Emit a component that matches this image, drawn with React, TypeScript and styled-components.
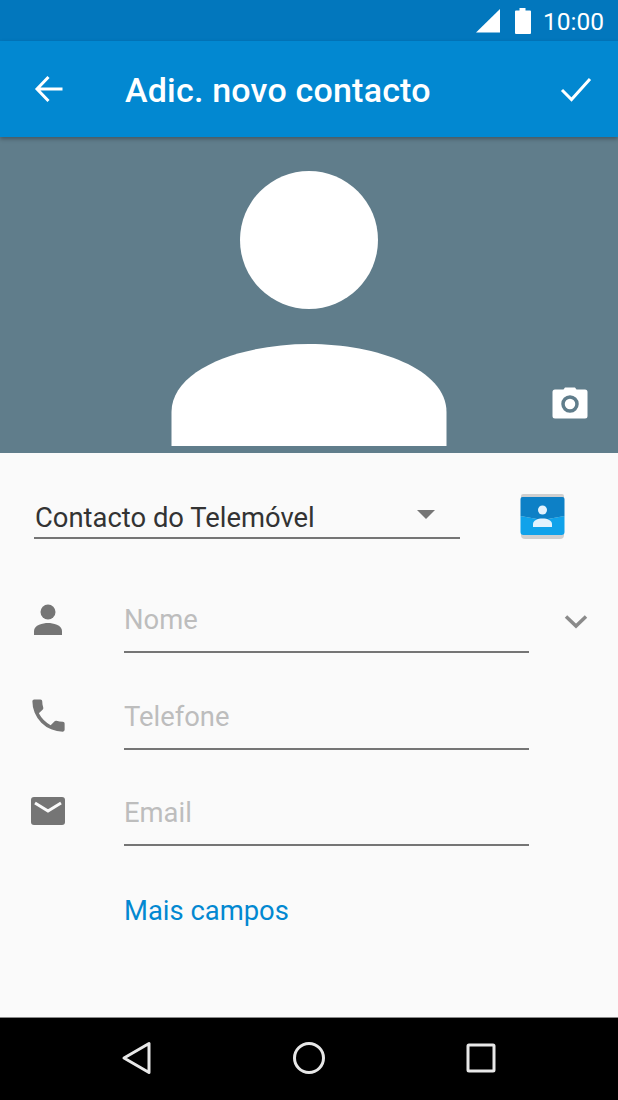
import { FC, ReactNode } from "react";
import styled, { createGlobalStyle } from "styled-components";

const GlobalStyle = createGlobalStyle`
    html, body {
        margin: 0;
        padding: 0;
        background: #000;
    }
    body {
        font-family: Roboto, "Noto Sans", sans-serif;
    }
`;

const Screen = styled.div`
    width: 618px;
    height: 1100px;
    display: flex;
    flex-direction: column;
    overflow: hidden;
    background: #fafafa;
`;

const StatusBar = styled.div`
    height: 41px;
    flex: none;
    background: #0277bd;
    color: #fff;
    display: flex;
    align-items: center;
    justify-content: flex-end;
    padding-right: 14px;
`;

const BatteryIcon = styled.svg`
    margin-left: 13px;
`;

const StatusTime = styled.span`
    font-size: 24.5px;
    margin-left: 11px;
    line-height: 41px;
    position: relative;
    top: 1px;
`;

const Header = styled.header`
    height: 96px;
    flex: none;
    background: #0288d1;
    display: flex;
    align-items: center;
    color: #fff;
    position: relative;
    z-index: 1;
    box-shadow: 0 2px 4px rgba(0, 0, 0, 0.3);
`;

const HeaderIcon = styled.svg`
    flex: none;
    margin-left: 28px;
`;

const Title = styled.h1`
    margin: 0 0 0 56px;
    flex: 1;
    font-size: 34px;
    font-weight: 500;
    letter-spacing: 0.2px;
    line-height: 96px;
    padding-top: 1px;
    box-sizing: border-box;
    height: 96px;
`;

const CheckIcon = styled.svg`
    flex: none;
    margin-right: 22px;
`;

const Photo = styled.div`
    height: 316px;
    flex: none;
    background: #607d8b;
    position: relative;
    display: flex;
    justify-content: center;
    padding-top: 34px;
    box-sizing: border-box;
`;

const CameraIcon = styled.svg`
    position: absolute;
    right: 30px;
    bottom: 34px;
`;

const Form = styled.main`
    flex: 1;
    background: #fafafa;
    padding-top: 36px;
    box-sizing: border-box;
`;

const AccountRow = styled.div`
    display: flex;
    align-items: flex-start;
    padding-left: 34px;
`;

const AccountSelect = styled.div`
    width: 426px;
    height: 50px;
    box-sizing: border-box;
    border-bottom: 2px solid #757575;
    display: flex;
    align-items: center;
    justify-content: space-between;
    padding: 0 25px 0 1px;
    font-size: 27.4px;
    color: #333;
`;

const AccountName = styled.span`
    padding-top: 10px;
`;

const Caret = styled.span`
    width: 0;
    height: 0;
    border-left: 9px solid transparent;
    border-right: 9px solid transparent;
    border-top: 9px solid #757575;
    margin-top: 2px;
`;

const AccountBadge = styled.svg`
    margin: 5px 0 0 59px;
`;

const Fields = styled.div`
    margin-top: 37px;
    display: flex;
    flex-direction: column;
    gap: 20.5px;
`;

const FieldRow = styled.div`
    display: grid;
    grid-template-columns: 124px 405px 1fr;
    height: 76px;
`;

const FieldIcon = styled.div<{ $top: number; $left: number }>`
    display: flex;
    justify-content: flex-start;
    align-items: flex-start;
    padding: ${(p) => p.$top}px 0 0 ${(p) => p.$left}px;
`;

const FieldLabel = styled.div`
    border-bottom: 2px solid #757575;
    font-size: 27.4px;
    line-height: 64px;
    padding-top: 11px;
    color: #bdbdbd;
    height: 76px;
    box-sizing: border-box;
`;

const Chevron = styled.svg`
    margin: 37px 0 0 35px;
`;

const MoreLink = styled.a`
    display: block;
    margin: 48px 0 0 124px;
    font-size: 27.4px;
    line-height: 34px;
    color: #0288d1;
`;

const NavBar = styled.nav`
    height: 83px;
    flex: none;
    background: #000;
    border-top: 1px solid #8a8a8a;
    box-sizing: border-box;
    padding-bottom: 2px;
    display: grid;
    grid-template-columns: repeat(3, 172px);
    justify-content: center;
    align-items: center;
    justify-items: center;
`;

interface IField {
    label: string;
    icon: ReactNode;
    top: number;
    left: number;
    extra?: ReactNode;
}

const Field: FC<IField> = ({ label, icon, top, left, extra }) => (
    <FieldRow>
        <FieldIcon $top={top} $left={left}>
            {icon}
        </FieldIcon>
        <FieldLabel>{label}</FieldLabel>
        {extra}
    </FieldRow>
);

const App: FC = () => {
    return (
        <Screen>
            <GlobalStyle />
            <StatusBar>
                <svg width="26" height="26" viewBox="0 0 26 26">
                    <path d="M25 1v23.500H1z" fill="#fff" />
                </svg>
                <BatteryIcon width="18" height="26" viewBox="0 0 18 26">
                    <path d="M5.500 0h6v2.500H16a1 1 0 0 1 1 1V25a1 1 0 0 1-1 1H2a1 1 0 0 1-1-1V3.500a1 1 0 0 1 1-1h3.500z" fill="#fff" />
                </BatteryIcon>
                <StatusTime>10:00</StatusTime>
            </StatusBar>

            <Header>
                <HeaderIcon width="41" height="41" viewBox="0 0 41 41" fill="none">
                    <path d="M34.500 20H10M20.500 8 9 20 20.500 32" stroke="#fff" strokeWidth="3" />
                </HeaderIcon>
                <Title>Adic. novo contacto</Title>
                <CheckIcon width="40" height="40" viewBox="0 0 40 40" fill="none">
                    <path d="M6 21 15.500 30.500 34 10" stroke="#fff" strokeWidth="3" />
                </CheckIcon>
            </Header>

            <Photo>
                <svg width="276" height="276" viewBox="0 0 276 276">
                    <circle cx="138" cy="69" r="69" fill="#fff" />
                    <path d="M0.500 275v-34C0.500 198 70 173 138 173s137.500 25 137.500 68v34z" fill="#fff" />
                </svg>
                <CameraIcon width="36" height="32" viewBox="0 0 36 32">
                    <path d="M11.500 2.500 13 .500h10l1.500 2H33a2.500 2.500 0 0 1 2.500 2.500v24a2.500 2.500 0 0 1-2.500 2.500H3A2.500 2.500 0 0 1 .500 29V5A2.500 2.500 0 0 1 3 2.500z" fill="#fff" />
                    <circle cx="18" cy="17" r="7" fill="none" stroke="#607d8b" strokeWidth="3.500" />
                </CameraIcon>
            </Photo>

            <Form>
                <AccountRow>
                    <AccountSelect>
                        <AccountName>Contacto do Telemóvel</AccountName>
                        <Caret />
                    </AccountSelect>
                    <AccountBadge width="47" height="46" viewBox="0 0 47 46">
                        <path d="M4 0h39a2 2 0 0 1 2 2v39a4 4 0 0 1-4 4H6a4 4 0 0 1-4-4V2a2 2 0 0 1 2-2z" fill="#cfcfcf" />
                        <path d="M4 3h39.500a2 2 0 0 1 2 2v17L23.500 26 1.500 22V5a2 2 0 0 1 2-2z" fill="#0d80c6" />
                        <path d="M1.500 22 23.500 26l22-4v16a3 3 0 0 1-3 3h-38a3 3 0 0 1-3-3z" fill="#10a2ea" />
                        <circle cx="23.500" cy="16" r="4.500" fill="#e3f2fd" />
                        <path d="M14 33v-3c0-3.500 4.500-5.500 9.500-5.500s9.500 2 9.500 5.500v3z" fill="#e3f2fd" />
                    </AccountBadge>
                </AccountRow>

                <Fields>
                    <Field
                        label="Nome"
                        top={26}
                        left={29}
                        icon={
                            <svg width="36" height="36" viewBox="0 0 36 36">
                                <circle cx="19" cy="9" r="7.500" fill="#757575" />
                                <path d="M5 32v-4c0-6 9-8 14-8s14 2 14 8v4z" fill="#757575" />
                            </svg>
                        }
                        extra={
                            <Chevron width="24" height="16" viewBox="0 0 24 16" fill="none">
                                <path d="M2 2.500 12 12 22 2.500" stroke="#8a8a8a" strokeWidth="3.500" />
                            </Chevron>
                        }
                    />
                    <Field
                        label="Telefone"
                        top={20}
                        left={27}
                        icon={
                            <svg width="43" height="43" viewBox="0 0 24 24">
                                <path d="M6.620 10.790a15.150 15.150 0 0 0 6.590 6.590l2.200-2.200a1 1 0 0 1 1.020-.24c1.120.37 2.330.57 3.570.57a1 1 0 0 1 1 1V20a1 1 0 0 1-1 1A17 17 0 0 1 3 4a1 1 0 0 1 1-1h3.500a1 1 0 0 1 1 1c0 1.250.2 2.450.57 3.570a1 1 0 0 1-.25 1.020z" fill="#757575" />
                            </svg>
                        }
                    />
                    <Field
                        label="Email"
                        top={26}
                        left={29}
                        icon={
                            <svg width="38" height="30" viewBox="0 0 38 30">
                                <path d="M5 1h28a3 3 0 0 1 3 3v22a3 3 0 0 1-3 3H5a3 3 0 0 1-3-3V4a3 3 0 0 1 3-3z" fill="#757575" />
                                <path d="M6 7 19 15 32 7" fill="none" stroke="#fafafa" strokeWidth="3" />
                            </svg>
                        }
                    />
                </Fields>

                <MoreLink>Mais campos</MoreLink>
            </Form>

            <NavBar>
                <svg width="32" height="34" viewBox="0 0 32 34" fill="none">
                    <path d="M28 2.500v29L3 17z" stroke="#e8e8e8" strokeWidth="3" strokeLinejoin="round" />
                </svg>
                <svg width="34" height="34" viewBox="0 0 34 34" fill="none">
                    <circle cx="17" cy="17" r="14.500" stroke="#e8e8e8" strokeWidth="3" />
                </svg>
                <svg width="30" height="30" viewBox="0 0 30 30" fill="none">
                    <rect x="2" y="2" width="26" height="26" rx="1" stroke="#e8e8e8" strokeWidth="3" />
                </svg>
            </NavBar>
        </Screen>
    );
};

export default App;
